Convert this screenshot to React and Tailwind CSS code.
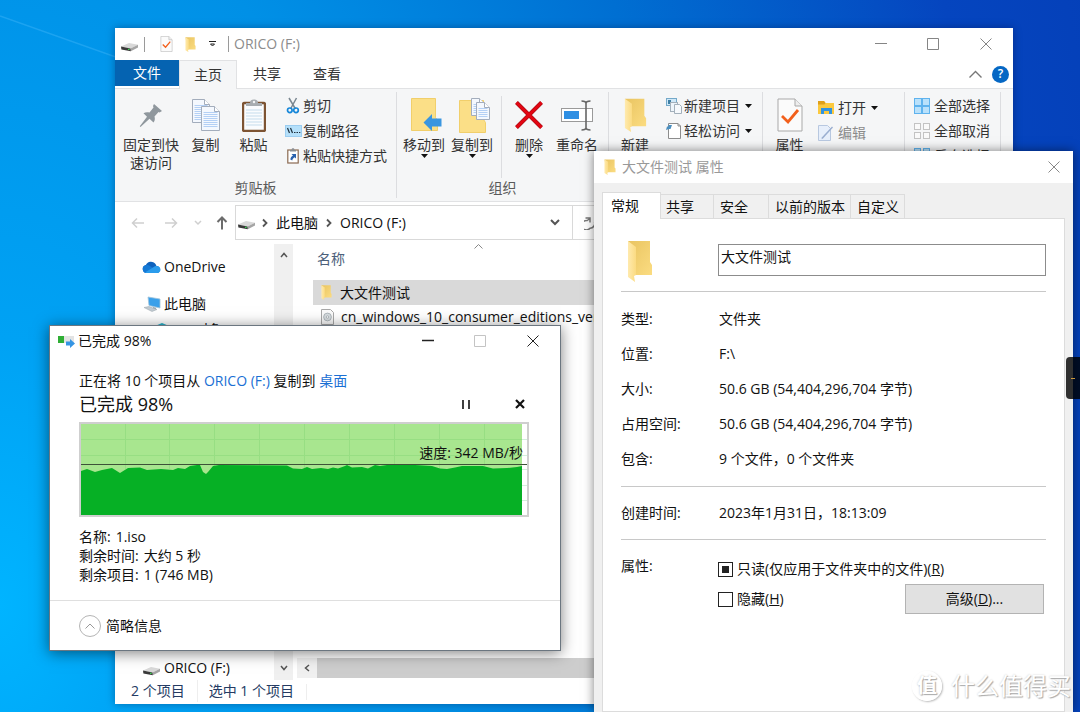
import React, { useEffect, useRef } from "react";

/* ---------- icons ---------- */

function DriveIcon({ className = "" }) {
  return (
    <svg width="17" height="10" viewBox="0 0 17 10" className={`shrink-0 ${className}`} aria-hidden="true">
      <path d="M0 4.5 8 1l9 1.8-7.5 3.6z" fill="#d9d9d9" />
      <path d="M9.5 6.4 17 2.8v2.6L9.8 9.2z" fill="#a5a5a5" />
      <path d="M0 4.5l9.5 1.9.3 2.8L.4 7.4z" fill="#3a3a3a" />
      <rect x="7" y="6.8" width="1.6" height="1.2" fill="#39d353" />
    </svg>
  );
}

function FolderIcon({ width = 12, height = 16, className = "" }) {
  return (
    <svg width={width} height={height} viewBox="0 0 26 42" preserveAspectRatio="none" className={`shrink-0 ${className}`} aria-hidden="true">
      <defs>
        <linearGradient id="folderBack" x1="0" x2="1" y1="0" y2="1">
          <stop offset="0" stopColor="#e9c461" />
          <stop offset="1" stopColor="#fbdc81" />
        </linearGradient>
        <linearGradient id="folderFlap" x1="0" x2="1">
          <stop offset="0" stopColor="#ffeaae" />
          <stop offset="1" stopColor="#fbdb82" />
        </linearGradient>
      </defs>
      <path d="M1 1h22v21l2 3v10H6z" fill="url(#folderBack)" />
      <path d="M1 1l8 6v28l-2 1 1 6-7-5z" fill="url(#folderFlap)" />
    </svg>
  );
}

function PropertiesIcon({ width, height }) {
  return (
    <svg width={width} height={height} viewBox="0 0 26 34" className="shrink-0" aria-hidden="true">
      <path d="M1 1h17l7 7v25H1z" fill="#fbfbfb" stroke="#a9a9a9" strokeWidth="1" />
      <path d="M18 1v7h7" fill="#eee" stroke="#a9a9a9" strokeWidth="1" />
      <path d="M5 18l6 6L21 12" fill="none" stroke="#f2601c" strokeWidth="2.8" />
    </svg>
  );
}

function PinIcon() {
  return (
    <svg width="24" height="25" viewBox="0 0 24 25" aria-hidden="true">
      <path d="M15 1l8 7-2.500 1.500-1-.5-4 4.500c.8 2.500.2 4.500-1 6L10.500 15.800 1.500 24 .8 23.300 8 13.800 4.500 10.200c1.700-1 3.800-1.200 6-.6L14.500 4.500 14 3z" fill="#8f979d" />
    </svg>
  );
}

function PageShape({ x, y, w, h }) {
  const rows = [];
  for (let i = 6; i < h - 2; i += 2) rows.push(i);
  return (
    <g>
      <path d={`M${x} ${y}h${w - 5}l5 5v${h - 5}h-${w}z`} fill="#f4f8fe" stroke="#a3adbc" strokeWidth="1" />
      <path d={`M${x + w - 5} ${y}v5h5`} fill="#fff" stroke="#a3adbc" strokeWidth="1" />
      {rows.map((r) => (
        <path key={r} d={`M${x + 2} ${y + r}h${w - 4}`} stroke="#b4d0f5" strokeWidth="1" />
      ))}
    </g>
  );
}

function CopyIcon() {
  return (
    <svg width="28" height="32" viewBox="0 0 28 32" aria-hidden="true">
      <PageShape x={0.5} y={0.5} w={17} h={23} />
      <PageShape x={9.5} y={7.5} w={18} h={24} />
    </svg>
  );
}

function PasteIcon() {
  return (
    <svg width="24" height="33" viewBox="0 0 24 33" aria-hidden="true">
      <rect x="1" y="4" width="22" height="28" rx="1.500" fill="#fafcfe" stroke="#7d5433" strokeWidth="2.400" />
      <path d="M4 11h16M4 14h16M4 17h16M4 20h16M4 23h16M4 26h16" stroke="#c5dcec" strokeWidth="1" />
      <path d="M4 4h4c0-2 1-3.500 4-3.500S16 2 16 4h4v3H4z" fill="#a8adb1" />
      <circle cx="12" cy="3" r="1.200" fill="#f3f5f7" />
    </svg>
  );
}

function ScissorsIcon() {
  return (
    <svg width="14" height="17" viewBox="0 0 14 17" aria-hidden="true">
      <path d="M3 1l6.500 11M10.500 1L4.500 12" stroke="#7a8790" strokeWidth="1.500" fill="none" />
      <circle cx="3.800" cy="13.300" r="2.300" fill="none" stroke="#1687d9" strokeWidth="1.700" />
      <circle cx="10" cy="13.300" r="2.300" fill="none" stroke="#1687d9" strokeWidth="1.700" />
    </svg>
  );
}

function PathIcon() {
  return (
    <svg width="17" height="12" viewBox="0 0 17 12" aria-hidden="true">
      <rect x="0.500" y="0.500" width="16" height="11" fill="#b5e0fa" stroke="#9ccdf0" />
      <path d="M2.500 3l2 5M5.500 3l2 5" stroke="#1e2f3c" strokeWidth="1.200" />
      <path d="M9 7.500h1.500M11.500 7.500H13M14 7.500h1.300" stroke="#1e2f3c" strokeWidth="1.200" />
    </svg>
  );
}

function ShortcutPasteIcon() {
  return (
    <svg width="12" height="16" viewBox="0 0 12 16" aria-hidden="true">
      <rect x="0.800" y="2" width="10.400" height="13" fill="#fff" stroke="#8b6a52" strokeWidth="1.200" />
      <path d="M3 2h1.500C4.500.8 5 .3 6 .3S7.500.8 7.500 2H9v1.500H3z" fill="#8b8f93" />
      <path d="M4.500 6H9v4.500L7.600 9.200C6 10 5.500 11 5.300 12.500L3.300 11.500C3.500 9.500 4.500 8.300 6 7.500z" fill="#2a62ae" />
    </svg>
  );
}

function MoveToIcon() {
  return (
    <svg width="36" height="34" viewBox="-5 0 36 34" aria-hidden="true">
      <path d="M.5.5h24v19l2 3v10H.5z" fill="#fbdf87" stroke="#f1cf6b" />
      <path d="M12.500 24.500L21 16v4.500h9.500v8H21V33z" fill="#3a96e0" />
    </svg>
  );
}

function CopyToIcon() {
  return (
    <svg width="36" height="35" viewBox="-5 0 36 35" aria-hidden="true">
      <path d="M.5 2.500h24v19l2 3v10H.5z" fill="#fbdf87" stroke="#f1cf6b" />
      <PageShape x={12.5} y={0.5} w={13} h={17} />
      <PageShape x={17.5} y={4.5} w={13} h={17} />
    </svg>
  );
}

function DeleteIcon() {
  return (
    <svg width="28" height="28" viewBox="0 0 28 28" aria-hidden="true">
      <path d="M1.500 1.500l25 25M26.500 1.500l-25 25" stroke="#a00a12" strokeWidth="4" />
      <path d="M1.500 1.500l25 25M26.500 1.500l-25 25" stroke="#e30613" strokeWidth="3" />
    </svg>
  );
}

function RenameIcon() {
  return (
    <svg width="33" height="31" viewBox="0 0 33 31" aria-hidden="true">
      <rect x="0.500" y="8.500" width="31" height="13" fill="#fff" stroke="#9a9a9a" />
      <rect x="3" y="11" width="15" height="8" fill="#2f8fe3" />
      <path d="M20.500 1c3 0 4.500 1 4.500 2.500C25 2 26.500 1 29.500 1M25 3v25M20.500 30c3 0 4.500-1 4.500-2.500 0 1.500 1.500 2.500 4.500 2.500" fill="none" stroke="#666" strokeWidth="1.600" />
    </svg>
  );
}

function NewItemIcon() {
  return (
    <svg width="16" height="16" viewBox="0 0 16 16" aria-hidden="true">
      <rect x="0.500" y="0.500" width="10" height="7" fill="#cfe8f8" stroke="#74a9c9" />
      <rect x="2" y="2" width="3" height="4" fill="#3e7fa5" />
      <rect x="4.500" y="4.500" width="7" height="9" fill="#eef5fb" stroke="#a3b0bb" />
      <path d="M8.500 6.500h5l2 2v7h-7z" fill="#f6f9fc" stroke="#a3b0bb" />
    </svg>
  );
}

function EasyAccessIcon() {
  return (
    <svg width="16" height="17" viewBox="0 0 16 17" aria-hidden="true">
      <path d="M2.500 1.500H12l2.500 2.500v12.500H2.500z" fill="#fff" stroke="#8d8d8d" />
      <path d="M12 1.500V4h2.500" fill="none" stroke="#8d8d8d" />
      <path d="M0 8l1-3.500h1.500V3H6L4.500 7H3z" fill="#4a8fc0" />
    </svg>
  );
}

function OpenIcon() {
  return (
    <svg width="17" height="15" viewBox="0 0 17 15" aria-hidden="true">
      <path d="M0 1h6l1.500 2H16v11H0z" fill="#fbc93f" />
      <path d="M0 1h6l1.500 2-1 1.500H0z" fill="#e0a019" />
      <path d="M3 14V8h11v6h-3v-3H6v3z" fill="#3193e0" />
    </svg>
  );
}

function EditIcon() {
  return (
    <svg width="16" height="16" viewBox="0 0 16 16" aria-hidden="true">
      <path d="M.5.5h9l3 3v12H.5z" fill="#e7effb" stroke="#b8c8e0" />
      <path d="M15 2.500L5 13.500l-1.500.8.5-2L14 1.500z" fill="#9aaed0" />
    </svg>
  );
}

function GridIcon({ fill, stroke, split }) {
  return (
    <svg width="16" height="16" viewBox="0 0 16 16" aria-hidden="true">
      {[0, split].map((x) =>
        [0, split].map((y) => (
          <rect key={`${x}-${y}`} x={x + 0.5} y={y + 0.5} width={15 - split} height={15 - split} fill={fill} stroke={stroke} />
        ))
      )}
    </svg>
  );
}

function CloudIcon() {
  return (
    <svg width="19" height="12" viewBox="0 0 19 12" aria-hidden="true">
      <path d="M4.500 12a4 4 0 01-.6-7.900A5.600 5.600 0 0113.500 3l1 2A3.600 3.600 0 0115.500 12z" fill="#0f62bd" />
      <path d="M4.500 12a4 4 0 01-1-7.800c2-.5 4 .3 5.500 1.500L17 11c-.5.700-1 1-1.500 1z" fill="#1479d6" />
      <path d="M3 11.500L12.500 5.500c3-1.500 6 .5 6 3.300 0 2-1.500 3.200-3.300 3.200H4.500z" fill="#2b9cec" />
    </svg>
  );
}

function ComputerIcon() {
  return (
    <svg width="17" height="16" viewBox="0 0 17 16" aria-hidden="true">
      <path d="M4 1l12 2v9L5 9.500z" fill="#3aa0ea" stroke="#9fc4dc" strokeWidth=".8" />
      <path d="M9 11l3 .7v1.500L9 13z" fill="#9aa7b0" />
      <path d="M0 11.500l5-1 8 3-5 2z" fill="#c2cbd2" stroke="#98a4ac" strokeWidth=".5" />
    </svg>
  );
}

function CubeIcon() {
  return (
    <svg width="16" height="16" viewBox="0 0 16 16" aria-hidden="true">
      <path d="M8 1l7 3v8l-7 3-7-3V4z" fill="#27b3cc" />
      <path d="M8 7v8l7-3V4z" fill="#168aa3" />
    </svg>
  );
}

function DiscFileIcon() {
  return (
    <svg width="13" height="16" viewBox="0 0 13 16" className="shrink-0" aria-hidden="true">
      <path d="M.5.5h9l3 3v12H.5z" fill="#fafafa" stroke="#a8a8a8" />
      <circle cx="6.500" cy="8" r="3.900" fill="#d7dde0" stroke="#a2abb0" strokeWidth=".8" />
      <circle cx="6.500" cy="8" r="1.200" fill="#fff" stroke="#8e979c" strokeWidth=".6" />
    </svg>
  );
}

function CopyProgressIcon() {
  return (
    <svg width="17" height="13" viewBox="0 0 17 13" className="shrink-0" aria-hidden="true">
      <rect width="16" height="7" y="1" fill="#e3e3e3" />
      <rect width="6" height="7" y="1" fill="#2fae35" />
      <path d="M8 6.500h4V4l5 4.500-5 4.500v-2.500H8z" fill="#3595e4" />
    </svg>
  );
}

function Stroke({ w, h, d, color = "#555", width = 1, className = "" }) {
  return (
    <svg width={w} height={h} viewBox={`0 0 ${w} ${h}`} className={`shrink-0 ${className}`} aria-hidden="true">
      <path d={d} fill="none" stroke={color} strokeWidth={width} />
    </svg>
  );
}

const CLOSE = "M.5.5l11 11M11.500.5l-11 11";

function DownArrow({ className = "" }) {
  return (
    <svg width="7" height="4" viewBox="0 0 7 4" className={`shrink-0 ${className}`} aria-hidden="true">
      <path d="M0 0h7L3.500 4z" fill="#111" />
    </svg>
  );
}

function WindowButtons({ color, maxColor = color, minWidth = 1 }) {
  return (
    <div className="flex shrink-0 self-stretch">
      <button type="button" aria-label="最小化" className="grid w-[52px] place-items-center">
        <Stroke w={12} h={12} d="M0 5.500h12" color={color} width={minWidth} />
      </button>
      <button type="button" aria-label="最大化" className="grid w-[52px] place-items-center">
        <Stroke w={12} h={12} d="M.5.5h11v11H.5z" color={maxColor} />
      </button>
      <button type="button" aria-label="关闭" className="grid w-[54px] place-items-center">
        <Stroke w={12} h={12} d={CLOSE} color={color} />
      </button>
    </div>
  );
}

/* ---------- explorer window ---------- */

function BigButton({ icon, label, arrow, width }) {
  return (
    <button type="button" className={`flex shrink-0 flex-col items-center leading-[18px] ${width}`}>
      <span className="grid h-[38px] place-items-center">{icon}</span>
      <span className="mt-[2px] whitespace-pre">{label}</span>
      {arrow && <DownArrow />}
    </button>
  );
}

function SmallButton({ icon, label, arrow, muted, wide }) {
  return (
    <button type="button" className={`flex h-[25px] items-center whitespace-nowrap ${muted ? "text-[#8b8b8b]" : ""}`}>
      <span className={wide ? "w-[22px] pl-[2px]" : "grid w-5 place-items-center"}>{icon}</span>
      <span>{label}</span>
      {arrow && <DownArrow className="ml-[5px]" />}
    </button>
  );
}

function RibbonGroup({ width, label, children }) {
  return (
    <div className={`flex shrink-0 flex-col border-r border-[#dcdde0] ${width}`}>
      <div className="flex h-[86px] shrink-0 pt-1">{children}</div>
      <div className="mt-auto text-center leading-5 text-[#5a5a5a]">{label}</div>
    </div>
  );
}

function Ribbon() {
  return (
    <div className="flex h-[114px] shrink-0 overflow-hidden border-y border-[#e1e2e4] bg-[#f5f6f7] py-[3px] text-[#333]">
      <RibbonGroup width="w-[282px]" label="剪贴板">
        <BigButton width="w-[72px]" icon={<PinIcon />} label={"固定到快\n速访问"} />
        <BigButton width="w-[37px]" icon={<CopyIcon />} label="复制" />
        <BigButton width="w-[59px]" icon={<PasteIcon />} label="粘贴" />
        <div className="-mt-1 flex flex-col pt-px">
          <SmallButton icon={<ScissorsIcon />} label="剪切" />
          <SmallButton icon={<PathIcon />} label="复制路径" />
          <SmallButton icon={<ShortcutPasteIcon />} label="粘贴快捷方式" />
        </div>
      </RibbonGroup>
      <RibbonGroup width="w-[212px]" label="组织">
        <BigButton width="w-[54px]" icon={<MoveToIcon />} label="移动到" arrow />
        <BigButton width="w-[42px]" icon={<CopyToIcon />} label="复制到" arrow />
        <div className="mx-2 w-px bg-[#dcdde0]" />
        <BigButton width="w-[38px]" icon={<DeleteIcon />} label="删除" arrow />
        <BigButton width="w-[58px]" icon={<RenameIcon />} label="重命名" />
      </RibbonGroup>
      <RibbonGroup width="w-[154px]" label="新建">
        <BigButton width="w-[52px]" icon={<FolderIcon width={23} height={34} />} label="新建" />
        <div className="-mt-1 flex flex-col pl-[3px] pt-px">
          <SmallButton icon={<NewItemIcon />} label="新建项目" arrow />
          <SmallButton icon={<EasyAccessIcon />} label="轻松访问" arrow />
        </div>
      </RibbonGroup>
      <RibbonGroup width="w-[142px]" label="打开">
        <BigButton width="w-[53px]" icon={<PropertiesIcon width={26} height={34} />} label="属性" />
        <div className="-mt-px flex flex-col">
          <SmallButton icon={<OpenIcon />} label="打开" arrow wide />
          <SmallButton icon={<EditIcon />} label="编辑" muted wide />
        </div>
      </RibbonGroup>
      <RibbonGroup width="w-[96px]" label="选择">
        <div className="-mt-1 flex flex-col pl-[7px] pt-px">
          <SmallButton icon={<GridIcon fill="#b9e1fb" stroke="#5fb3ee" split={8} />} label="全部选择" wide />
          <SmallButton icon={<GridIcon fill="#fafafa" stroke="#c3c3c3" split={9} />} label="全部取消" wide />
          <SmallButton icon={<GridIcon fill="#b9e1fb" stroke="#5fb3ee" split={9} />} label="反向选择" wide />
        </div>
      </RibbonGroup>
    </div>
  );
}

function AddressRow() {
  return (
    <div className="flex h-[41px] shrink-0 items-center">
      <div className="flex w-[120px] items-center pl-4">
        <button type="button" aria-label="后退"><Stroke w={14} h={12} d="M13 6H1.500M6 1.500L1.500 6 6 10.500" color="#cfcfcf" width={1.5} /></button>
        <button type="button" aria-label="前进" className="ml-[19px]"><Stroke w={14} h={12} d="M1 6h11.500M8 1.500L12.500 6 8 10.500" color="#cfcfcf" width={1.5} /></button>
        <button type="button" aria-label="最近位置" className="ml-4"><Stroke w={8} h={6} d="M1 1l3 3 3-3" color="#cfcfcf" width={1.5} /></button>
        <button type="button" aria-label="上移" className="ml-[14px]"><Stroke w={12} h={14} d="M6 13.500V1.500M1.500 6L6 1.500 10.500 6" color="#6c6c6c" width={2} /></button>
      </div>
      <nav className="flex h-[35px] w-[338px] items-center border border-[#d9d9d9] text-[#111]" aria-label="地址">
        <DriveIcon className="ml-[2px] mt-1" />
        <Stroke w={6} h={10} d="M1 1.500L4.500 5 1 8.500" width={1.8} className="ml-[7px]" />
        <a href="#pc" className="ml-2">此电脑</a>
        <Stroke w={6} h={10} d="M1 1.500L4.500 5 1 8.500" width={1.8} className="ml-2" />
        <a href="#orico" className="ml-2">ORICO (F:)</a>
        <button type="button" aria-label="历史记录" className="ml-auto mr-3"><Stroke w={10} h={7} d="M1 1l4 4 4-4" width={2} /></button>
      </nav>
      <button type="button" aria-label="刷新" className="flex h-[35px] flex-1 items-center border-y border-[#d9d9d9] pl-[11px]">
        <Stroke w={13} h={14} d="M2.500 4.500A4.700 4.700 0 106 12.200 4.700 4.700 0 0010.500 6M1.500 2H6V6.500M6 2.500L2.500 5" color="#777" width={1.5} />
      </button>
    </div>
  );
}

function ExplorerWindow() {
  return (
    <section className="absolute bottom-2 left-[115px] right-[67px] top-7 flex flex-col overflow-hidden bg-white shadow-[0_0_8px_rgba(0,0,40,0.35)]">
      <header className="flex h-8 shrink-0 items-center text-[#8c8c8c]">
        <DriveIcon className="ml-[6px] mt-[5px]" />
        <span className="ml-[6px] h-[15px] w-px bg-[#9a9a9a]" />
        <span className="ml-[15px]"><PropertiesIcon width={13} height={16} /></span>
        <FolderIcon width={11} height={15} className="ml-3" />
        <Stroke w={7} h={6} d="M0 .5h7M1.500 3L3.500 5 5.500 3z" color="#222" className="ml-[13px]" />
        <span className="ml-3 h-4 w-px bg-[#9a9a9a]" />
        <h1 className="ml-[5px] flex-1">ORICO (F:)</h1>
        <WindowButtons color="#858585" />
      </header>

      <div className="flex h-7 shrink-0 items-center text-[#333]">
        <button type="button" className="h-[26px] w-16 self-start bg-[#0563b1] text-white">文件</button>
        <button type="button" className="relative z-10 -mb-px h-[29px] w-[58px] border-x border-t border-[#e1e2e4] bg-[#f5f6f7]">主页</button>
        <button type="button" className="w-[60px]">共享</button>
        <button type="button" className="w-[60px]">查看</button>
        <button type="button" aria-label="折叠功能区" className="ml-auto mr-[10px]"><Stroke w={13} h={8} d="M.5 7.500l6-6 6 6" color="#777" width={1.4} /></button>
        <button type="button" aria-label="帮助" className="mr-1 grid size-[17px] place-items-center rounded-full bg-[#0567c4] text-xs font-semibold leading-none text-white">?</button>
      </div>

      <Ribbon />
      <AddressRow />

      <div className="flex min-h-0 flex-1 pt-px">
        <nav className="flex w-[159px] shrink-0 flex-col justify-between text-[#111]" aria-label="导航窗格">
          <div className="pl-[27px]">
            <a href="#onedrive" className="flex h-[46px] items-center gap-[3px]"><CloudIcon />OneDrive</a>
            <a href="#pc" className="flex h-7 items-center gap-[3px] pl-[2px]"><ComputerIcon />此电脑</a>
            <a href="#objects" className="flex h-6 items-center gap-[3px] pl-3"><CubeIcon />3D 对象</a>
          </div>
          <a href="#orico" className="flex h-6 items-center gap-[4px] pl-7"><DriveIcon className="mt-[6px]" />ORICO (F:)</a>
        </nav>
        <div className="flex w-[19px] shrink-0 flex-col items-center justify-between bg-[#f0f0f0] pb-[9px] pt-2">
          <Stroke w={8} h={6} d="M1 5l3-3.500L7 5" width={1.5} />
          <Stroke w={8} h={6} d="M1 1l3 3.500L7 1" width={1.5} />
        </div>
        <div className="ml-[4px] flex min-w-0 flex-1 flex-col">
          <div className="flex h-9 shrink-0 items-start pl-5 text-[#4c607a]">
            <span className="pt-[5px] leading-5">名称</span>
            <Stroke w={9} h={5} d="M.5 4.500l4-4 4 4" color="#888" className="ml-[129px]" />
          </div>
          <ul className="text-[#111]">
            <li className="ml-4 flex h-[25px] items-center bg-[#d9d9d9] pl-2"><FolderIcon width={11} height={15} /><span className="ml-[8px]">大文件测试</span></li>
            <li className="ml-4 flex h-[23px] items-center whitespace-nowrap pl-2"><DiscFileIcon /><span className="ml-[7px]">cn_windows_10_consumer_editions_ver</span></li>
          </ul>
          <div className="mt-auto flex h-5 bg-[#f0f0f0]">
            <button type="button" aria-label="向左滚动" className="grid w-5 place-items-center"><Stroke w={6} h={8} d="M5 1L1.500 4 5 7" width={1.5} /></button>
            <div className="flex-1 bg-[#cdcdcd]" />
          </div>
          <div className="h-[2px] shrink-0" />
        </div>
      </div>

      <footer className="flex h-6 shrink-0 items-start pl-4 leading-[22px] text-[#243b63]">
        <span>2 个项目</span>
        <span className="ml-3 border-l border-[#eee] pl-[11px]">选中 1 个项目</span>
        <span className="ml-3 mt-1 h-4 w-px bg-[#eee]" />
      </footer>
    </section>
  );
}

/* ---------- copy progress dialog ---------- */

const SPEED = [
  [0, 47], [6, 45], [14, 48], [21, 46], [31, 44], [39, 49], [47, 44], [59, 43.5], [66, 46], [80, 45], [92, 46],
  [97, 44], [104, 45], [109, 42], [116, 41], [119, 41], [122, 48], [125, 50], [127, 48], [132, 42], [138, 41],
  [206, 41.5], [212, 44.5], [221, 45], [226, 43], [231, 45], [240, 44], [247, 45], [252, 43.5], [257, 44.5],
  [264, 42], [266, 41], [271, 43.5], [281, 43], [287, 44.5], [294, 41], [299, 42], [306, 41], [334, 41],
  [351, 42], [359, 44.5], [366, 45], [374, 43.5], [381, 42], [402, 42], [412, 44.5], [426, 44], [436, 43], [441, 42],
];
const SPEED_AREA = `M0 91L${SPEED.map((p) => p.join(" ")).join("L")}V91z`;

function SpeedChart() {
  return (
    <div className="relative mt-[6px] h-[95px] border-2 border-[#cfcfcf] bg-white">
      <svg width="100%" height="100%" viewBox="0 0 446 91" preserveAspectRatio="none" className="block" aria-hidden="true">
        <path d="M0 15.500h446M0 31.500h446M0 45.500h446M0 61.500h446M0 76.500h446" stroke="#d3f0dc" />
        <rect width="441" height="91" fill="#a8e68f" />
        <path d="M0 15.500h441M0 31.500h441M44.500 0v45M88.500 0v45M133.500 0v45M178.500 0v45M223.500 0v45M268.500 0v45M313.500 0v45M358.500 0v45M403.500 0v45" stroke="#97de83" fill="none" />
        <path d={SPEED_AREA} fill="#06b025" />
        <path d="M0 40.500h446" stroke="#3d5138" />
      </svg>
      <div className="absolute right-1 top-[19px] leading-5 text-[#111]">速度: 342 MB/秒</div>
    </div>
  );
}

function CopyDialog() {
  return (
    <section className="absolute left-[49px] top-[325px] flex w-[512px] flex-col border border-[#6b7680] bg-white text-[#111] shadow-[0_2px_14px_rgba(0,0,0,0.5)]">
      <header className="flex h-[30px] items-center pl-2">
        <CopyProgressIcon />
        <h2 className="ml-[3px] flex-1">已完成 98%</h2>
        <WindowButtons color="#222" maxColor="#c4c4c4" minWidth={1.5} />
      </header>
      <div className="pl-[29px] pr-[31px] pt-[14px]">
        <p className="leading-[22px]">
          正在将 10 个项目从 <a href="#orico" className="text-[#1a6fd4]">ORICO (F:)</a> 复制到 <a href="#desktop" className="text-[#1a6fd4]">桌面</a>
        </p>
        <div className="flex h-6 items-center">
          <strong className="flex-1 text-lg font-normal leading-6">已完成 98%</strong>
          <button type="button" aria-label="暂停" className="mr-[39px] grid size-5 place-items-center"><Stroke w={8} h={9} d="M1 0v9M7 0v9" color="#111" width={1.6} /></button>
          <button type="button" aria-label="取消"><Stroke w={10} h={10} d="M1 1l8 8M9 1L1 9" color="#111" width={2.2} className="mr-1" /></button>
        </div>
        <SpeedChart />
        <dl className="mt-[10px] leading-[19px]">
          <div className="flex gap-[5px]"><dt>名称:</dt><dd>1.iso</dd></div>
          <div className="flex gap-[5px]"><dt>剩余时间:</dt><dd>大约 5 秒</dd></div>
          <div className="flex gap-[5px]"><dt>剩余项目:</dt><dd>1 (746 MB)</dd></div>
        </dl>
      </div>
      <footer className="mt-4 flex h-[50px] items-center border-t border-[#dfdfdf] pl-[29px]">
        <button type="button" className="flex items-center gap-[5px]">
          <span className="grid size-[22px] place-items-center rounded-full border border-[#b5b5b5]"><Stroke w={10} h={6} d="M.5 5.500l4.500-4.500 4.500 4.500" color="#999" /></span>
          简略信息
        </button>
      </footer>
    </section>
  );
}

/* ---------- properties dialog ---------- */

const FACTS = [
  ["类型:", "文件夹"],
  ["位置:", "F:\\"],
  ["大小:", "50.6 GB (54,404,296,704 字节)"],
  ["占用空间:", "50.6 GB (54,404,296,704 字节)"],
  ["包含:", "9 个文件，0 个文件夹"],
];

function PropertiesDialog() {
  const readOnly = useRef(null);
  useEffect(() => {
    readOnly.current.indeterminate = true;
  }, []);
  const box = "size-[15px] shrink-0 appearance-none border border-[#222] bg-white bg-clip-content p-[3px] indeterminate:bg-[#222] checked:bg-[#222]";
  const tab = "h-6 border-r border-t border-[#dcdcdc] bg-[#f0f0f0] text-left";
  return (
    <section className="absolute bottom-0 left-[594px] right-[7px] top-[151px] flex flex-col bg-[#f0f0f0] text-[#111] shadow-[0_0_10px_rgba(0,0,0,0.5)]">
      <header className="flex h-8 shrink-0 items-center bg-white pl-[10px] pr-[13px] text-[#999]">
        <FolderIcon width={12} height={16} />
        <h2 className="ml-[6px] flex-1">大文件测试 属性</h2>
        <button type="button" aria-label="关闭"><Stroke w={12} h={12} d={CLOSE} color="#888" /></button>
      </header>
      <div className="flex min-h-0 flex-1 flex-col px-2 pt-[9px]">
        <div className="flex items-end" role="tablist">
          <button type="button" role="tab" aria-selected="true" className="relative z-10 -mb-px h-[27px] w-[59px] border-x border-t border-[#dcdcdc] bg-white pl-2 text-left">常规</button>
          <button type="button" role="tab" className={`${tab} w-[53px] pl-[5px]`}>共享</button>
          <button type="button" role="tab" className={`${tab} w-[55px] pl-[6px]`}>安全</button>
          <button type="button" role="tab" className={`${tab} w-[82px] pl-[6px]`}>以前的版本</button>
          <button type="button" role="tab" className={`${tab} w-[54px] pl-[6px]`}>自定义</button>
        </div>
        <div className="flex-1 border border-[#dcdcdc] bg-white px-[18px]">
          <div className="flex h-[73px] border-b border-[#c8c8c8] pt-[21px]">
            <div className="w-[97px] pl-[6px]"><FolderIcon width={26} height={42} /></div>
            <div className="flex-1 pt-[4px]">
              <input aria-label="文件夹名称" defaultValue="大文件测试" className="block h-8 w-full border border-[#8c8c8c] bg-white pb-2 pl-[2px] outline-none" />
            </div>
          </div>
          <dl className="border-b border-[#c8c8c8] pb-[10px] pt-[9px]">
            {FACTS.map(([k, v]) => (
              <div key={k} className="flex h-[35px] items-center"><dt className="w-[98px]">{k}</dt><dd>{v}</dd></div>
            ))}
          </dl>
          <dl className="border-b border-[#c8c8c8]">
            <div className="flex h-[52px] items-center"><dt className="w-[98px]">创建时间:</dt><dd>2023年1月31日，18:13:09</dd></div>
          </dl>
          <div className="flex pt-4">
            <div className="w-[97px] leading-5">属性:</div>
            <div className="flex-1">
              <label className="mt-[2px] flex h-[22px] items-center gap-1">
                <input ref={readOnly} type="checkbox" className={box} />
                <span>只读(仅应用于文件夹中的文件)(<u>R</u>)</span>
              </label>
              <div className="mt-1 flex items-center justify-between">
                <label className="flex items-center gap-1">
                  <input type="checkbox" className={box} />
                  <span>隐藏(<u>H</u>)</span>
                </label>
                <button type="button" className="mr-[2px] h-[30px] w-[139px] border border-[#b3b3b3] bg-[#e1e1e1]">高级(<u>D</u>)...</button>
              </div>
            </div>
          </div>
        </div>
      </div>
    </section>
  );
}

export default function App() {
  return (
    <main className="relative h-screen overflow-hidden bg-[radial-gradient(ellipse_1150px_1900px_at_0%_85%,#00b4ff_0%,#00a2f4_14%,#0090e6_38%,#006fd2_62%,#0545bf_88%,#053cb4_110%)] font-['Open_Sans','Noto_Sans_CJK_SC',sans-serif] text-sm">
      <svg width="130" height="90" viewBox="0 0 130 90" className="absolute left-0 top-0" aria-hidden="true">
        <path d="M0 16L130 62" stroke="#5cc4ff" strokeOpacity=".3" strokeWidth="1.500" />
      </svg>
      <ExplorerWindow />
      <CopyDialog />
      <PropertiesDialog />
      <button type="button" aria-label="侧边工具" className="absolute right-0 top-[357px] flex h-[42px] w-[14px] items-center justify-center rounded-l-sm bg-black/80">
        <span className="h-px w-1 bg-[#c9973f]" />
      </button>
      <div className="absolute bottom-[10px] right-[9px] flex items-center gap-[9px] text-white [text-shadow:1px_1px_1px_#aaa,0_0_2px_#ccc]">
        <span className="grid size-[30px] place-items-center rounded-full border-2 border-white text-xl font-bold leading-none shadow-[1px_1px_2px_#bbb]">值</span>
        <span className="text-2xl leading-8">什么值得买</span>
      </div>
    </main>
  );
}
